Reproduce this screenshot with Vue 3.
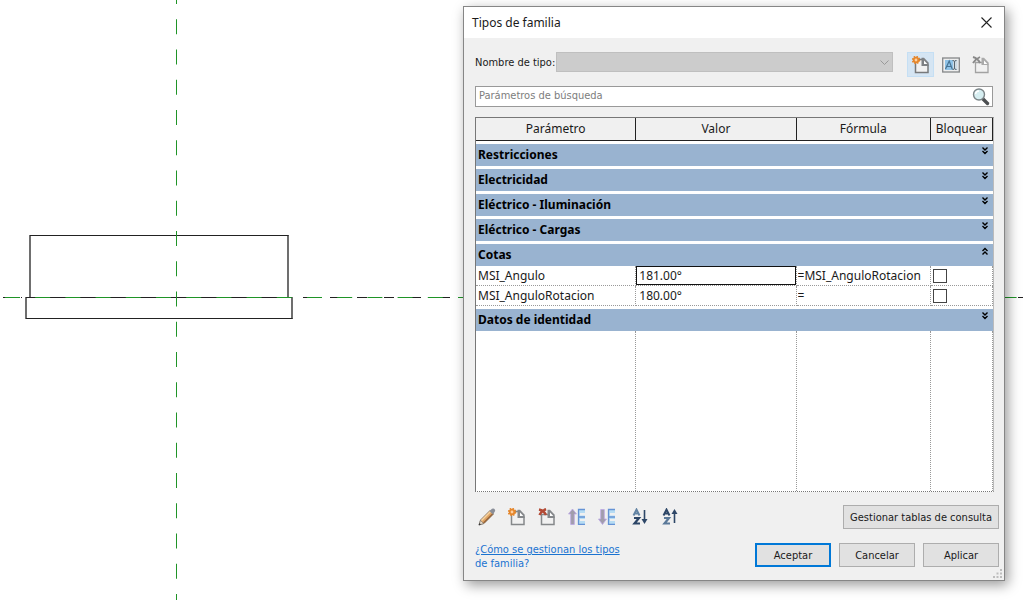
<script setup>
import { ref, reactive } from 'vue'

const search = ref('')

const groups = reactive([
  { name: 'Restricciones', open: false, rows: [] },
  { name: 'Electricidad', open: false, rows: [] },
  { name: 'Eléctrico - Iluminación', open: false, rows: [] },
  { name: 'Eléctrico - Cargas', open: false, rows: [] },
  {
    name: 'Cotas',
    open: true,
    rows: [
      { name: 'MSI_Angulo', value: '181.00°', formula: '=MSI_AnguloRotacion', locked: false, active: true },
      { name: 'MSI_AnguloRotacion', value: '180.00°', formula: '=', locked: false, active: false }
    ]
  },
  { name: 'Datos de identidad', open: false, rows: [] }
])
</script>

<template>
  <main class="workspace">
    <svg class="drawing" aria-hidden="true">
      <g fill="none" stroke="#222" stroke-width="1">
        <path d="M30 235V297M288 235V297M26 297V319M292 297V319" stroke-width="1.300" />
        <path d="M30 235.500H288.500M26 297.500H292M26 318.500H292.500" />
        <path d="M303 297.500H464" stroke-dasharray="10 17" />
        <path d="M438 297.500H450M3 297.500H5M21 297.500H22M1018 297.500H1023" />
        <path d="M5 297.500H1018" stroke="#1f9427" stroke-dasharray="15 15.200" />
        <path d="M176.500 -11V600" stroke="#1f9427" stroke-dasharray="15 15.250" />
      </g>
    </svg>

    <section class="dialog" role="dialog" aria-labelledby="dialog-title">
      <header class="titlebar">
        <h1 id="dialog-title">Tipos de familia</h1>
        <button class="close" type="button" aria-label="Cerrar">
          <svg width="11" height="11" viewBox="0 0 11 11"><path d="M.5.5l10 10M10.500.5l-10 10" stroke="#222" stroke-width="1.100" /></svg>
        </button>
      </header>

      <div class="content">
        <div class="type-row">
          <label for="type-name">Nombre de tipo:</label>
          <div class="select-wrap">
            <select id="type-name" disabled><option></option></select>
            <svg class="arrow" width="9" height="6" viewBox="0 0 9 6"><path d="M.5.5l4 4 4-4" fill="none" stroke="#999" /></svg>
          </div>
          <div class="type-tools">
            <button class="tool selected" type="button" aria-label="Nuevo tipo">
              <svg width="18" height="18" viewBox="0 0 18 18">
                <path d="M3.500 3.500H10.500L16 9V16.500H3.500Z" fill="#f1f1f1" stroke="#77797b" stroke-width="1.500" />
                <path d="M9.500 1.800h2.500l4.700 5V10H9.500Z" fill="#7e8184" /><path d="M12 4.500v3.500h3.300Z" fill="#fff" />
                <circle cx="4" cy="4" r="3.200" fill="#e5862b" /><circle cx="4" cy="4" r="3.500" fill="none" stroke="#e5862b" stroke-width="1.500" stroke-dasharray="1.500 1.250" /><circle cx="4" cy="4" r="1.400" fill="#ffd0a0" />
              </svg>
            </button>
            <button class="tool" type="button" aria-label="Cambiar nombre">
              <svg width="18" height="16" viewBox="0 0 18 16">
                <rect x=".7" y="1" width="16.600" height="14" fill="#eee" stroke="#858789" stroke-width="1.300" />
                <rect x="3" y="3" width="8" height="10" fill="#8fc3e8" /><rect x="11" y="3" width="4.500" height="10" fill="#cddbe5" />
                <path d="M3.500 12L7.200 4l3 8M5 9.500h4" fill="none" stroke="#477393" stroke-width="1.200" />
                <path d="M10.500 3.500q2 0 2 1.200v6.600q0 1.200-2 1.200M14.500 3.500q-2 0-2 1.200v6.600q0 1.200 2 1.200" fill="none" stroke="#57656f" />
              </svg>
            </button>
            <button class="tool" type="button" aria-label="Suprimir tipo">
              <svg width="18" height="18" viewBox="0 0 18 18">
                <path d="M3.500 6.500H10.500L16 9V16.500H3.500Z" fill="#f1f1f1" stroke="#a2a2a2" stroke-width="1.300" />
                <path d="M9.500 1.800h2.500l4.700 5V9H9.500Z" fill="#aaa" /><path d="M12 4.500v3.500h3.300Z" fill="#fff" />
                <path d="M1 1q5 1.500 7 6M8 1Q3.500 3 1 7" fill="none" stroke="#898989" stroke-width="1.900" />
              </svg>
            </button>
          </div>
        </div>

        <div class="search">
          <input v-model="search" type="text" placeholder="Parámetros de búsqueda" aria-label="Parámetros de búsqueda">
          <button type="button" aria-label="Buscar">
            <svg width="18" height="18" viewBox="0 0 18 18">
              <path d="M10.500 10.500l5 5" stroke="#4c4f51" stroke-width="3.400" stroke-linecap="round" />
              <circle cx="7" cy="6.500" r="5.500" fill="#d6eef1" stroke="#7c8588" stroke-width="1.400" />
              <path d="M3.500 6Q4 3 7 3" fill="none" stroke="#fff" stroke-width="1.500" />
            </svg>
          </button>
        </div>

        <table class="params">
          <colgroup><col class="c-name"><col class="c-value"><col class="c-formula"><col></colgroup>
          <thead>
            <tr><th scope="col">Parámetro</th><th scope="col">Valor</th><th scope="col">Fórmula</th><th scope="col">Bloquear</th></tr>
          </thead>
          <tbody v-for="group in groups" :key="group.name">
            <tr>
              <td class="group" colspan="4">
                <button type="button" :aria-expanded="group.open" @click="group.open = !group.open">
                  <span>{{ group.name }}</span>
                  <svg :class="{ up: group.open }" width="6" height="8" viewBox="0 0 6 8"><path d="M.5.5L3 3 5.500.5M.5 4L3 6.500 5.500 4" fill="none" stroke="#000" stroke-width="1.400" /></svg>
                </button>
              </td>
            </tr>
            <template v-if="group.open">
              <tr v-for="row in group.rows" :key="row.name" class="param">
                <td>{{ row.name }}</td>
                <td><input v-model="row.value" type="text" :class="{ active: row.active }" :aria-label="'Valor de ' + row.name"></td>
                <td><input v-model="row.formula" type="text" :aria-label="'Fórmula de ' + row.name"></td>
                <td><input v-model="row.locked" type="checkbox" :aria-label="'Bloquear ' + row.name"></td>
              </tr>
            </template>
          </tbody>
          <tbody>
            <tr class="filler"><td></td><td></td><td></td><td></td></tr>
          </tbody>
        </table>
      </div>

      <footer class="footer">
        <div class="footer-row">
          <div class="param-tools">
            <button type="button" aria-label="Editar parámetro">
              <svg width="18" height="18" viewBox="0 0 18 18">
                <path d="M1 17l1.500-5L12 2.500 15.500 6 6 15.500Z" fill="#e0a566" stroke="#75685b" stroke-width=".8" />
                <path d="M3.500 12.500L13 3" stroke="#f6d4a2" stroke-width="1.500" />
                <path d="M5.500 15L15 5.500" stroke="#95643a" stroke-width="1.200" />
                <path d="M11.500 3L14 .8q2-.8 3 1 .5 1-.3 1.900L15 6.500Z" fill="#8a8e98" />
                <path d="M1 17l1.500-4.500L5.500 15.500Z" fill="#e8dccb" stroke="#777" stroke-width=".6" /><path d="M.7 17.300l.8-2.300 1.500 1.500Z" fill="#333" />
              </svg>
            </button>
            <button type="button" aria-label="Nuevo parámetro">
              <svg width="18" height="18" viewBox="0 0 18 18">
                <path d="M3.500 3.500H10.500L16 9V16.500H3.500Z" fill="#f1f1f1" stroke="#85888a" stroke-width="1.500" />
                <path d="M9.500 1.800h2.500l4.700 5V10H9.500Z" fill="#85888b" /><path d="M12 4.500v3.500h3.300Z" fill="#fff" />
                <circle cx="4" cy="4" r="3.200" fill="#e5862b" /><circle cx="4" cy="4" r="3.500" fill="none" stroke="#e5862b" stroke-width="1.500" stroke-dasharray="1.500 1.250" /><circle cx="4" cy="4" r="1.400" fill="#ffd0a0" />
              </svg>
            </button>
            <button type="button" aria-label="Suprimir parámetro">
              <svg width="18" height="18" viewBox="0 0 18 18">
                <path d="M3.500 6.500H10.500L16 9V16.500H3.500Z" fill="#f1f1f1" stroke="#85888a" stroke-width="1.500" />
                <path d="M9.500 1.800h2.500l4.700 5V10H9.500Z" fill="#85888b" /><path d="M12 4.500v3.500h3.300Z" fill="#fff" />
                <path d="M1 1.500q5 1 7 5.500M8 1Q3.500 3 1.500 7" fill="none" stroke="#b34a35" stroke-width="2.500" />
              </svg>
            </button>
            <button type="button" aria-label="Subir parámetro">
              <svg width="18" height="18" viewBox="0 0 18 18">
                <path d="M4.500 1L8.500 6H6.300V16.500H2.700V6H.5Z" fill="#a19dab" stroke="#bba7e5" stroke-width=".8" />
                <path d="M10 1h7v4h-5v2.500h5v3.500h-5v2h5v4h-7Z" fill="#b7dcf3" /><path d="M17 1.500h-6.500v14.800H17M11 9h6" fill="none" stroke="#6593d5" stroke-width="1.300" />
              </svg>
            </button>
            <button type="button" aria-label="Bajar parámetro">
              <svg width="18" height="18" viewBox="0 0 18 18">
                <path d="M2.700 1.500H6.300V11H8.500L4.500 16.500.5 11H2.700Z" fill="#a19dab" stroke="#bba7e5" stroke-width=".8" />
                <path d="M10 1h7v4h-5v2.500h5v3.500h-5v2h5v4h-7Z" fill="#b7dcf3" /><path d="M17 1.500h-6.500v14.800H17M11 9h6" fill="none" stroke="#6593d5" stroke-width="1.300" />
              </svg>
            </button>
            <button class="sort" type="button" aria-label="Orden ascendente">
              <svg width="18" height="18" viewBox="0 0 18 18">
                <path d="M1.500 7.500L4.500 1.500l3 6M3 5.500h3" fill="none" stroke="#6283a3" stroke-width="1.900" />
                <path d="M2 10h5L2.500 15.500h5.500" fill="none" stroke="#2d4667" stroke-width="2.200" />
                <path d="M12.500 2v11" stroke="#2d4667" stroke-width="1.600" /><path d="M9.500 11h6l-3 5Z" fill="#2d4667" />
              </svg>
            </button>
            <button type="button" aria-label="Orden descendente">
              <svg width="18" height="18" viewBox="0 0 18 18">
                <path d="M1.500 7.500L4.500 1.500l3 6M3 5.500h3" fill="none" stroke="#2d4667" stroke-width="1.900" />
                <path d="M2 10h5L2.500 15.500h5.500" fill="none" stroke="#5b7999" stroke-width="2.200" />
                <path d="M12.500 5v10" stroke="#2d4667" stroke-width="1.600" /><path d="M9.500 6h6l-3-5Z" fill="#2d4667" />
              </svg>
            </button>
          </div>
          <button class="push lookup" type="button">Gestionar tablas de consulta</button>
        </div>
        <div class="footer-row actions">
          <a class="help" href="#"><span class="under">¿Cómo se gestionan los tipos</span><br>de familia?</a>
          <div class="buttons">
            <button class="push primary" type="button">Aceptar</button>
            <button class="push" type="button">Cancelar</button>
            <button class="push" type="button">Aplicar</button>
          </div>
        </div>
        <svg class="grip" width="9" height="9" viewBox="0 0 9 9" fill="#bdbdbd"><path d="M7 0h2v2H7zM3.500 3.500h2v2h-2zM7 3.500h2v2H7zM0 7h2v2H0zM3.500 7h2v2h-2zM7 7h2v2H7z" /></svg>
      </footer>
    </section>
  </main>
</template>

<style>
body { margin: 0; background: #fff; }
</style>

<style scoped>
* { box-sizing: border-box; }
.workspace { position: relative; min-height: 100vh; overflow: hidden; font-family: "DejaVu Sans Condensed", "DejaVu Sans", sans-serif; font-size: 11px; color: #1a1a1a; }
.drawing { position: absolute; inset: 0; width: 100%; height: 100%; }
.dialog { position: absolute; top: 6px; left: 463px; right: 19px; background: #f0f0f0; border: 1px solid #868686; box-shadow: 3px 4px 12px rgba(0, 0, 0, 0.4); }
button, input, select { font: inherit; color: inherit; margin: 0; padding: 0; border: 0; border-radius: 0; background: none; }
button svg { display: block; }

.titlebar { display: flex; justify-content: space-between; align-items: center; height: 31px; padding: 0 12px 0 8px; background: #fff; }
h1 { margin: 0; font: 400 12px/16px "Noto Sans", sans-serif; }

.content { padding: 14px 10px 0 11px; }
.type-row { display: flex; align-items: flex-start; }
.type-row label { line-height: 22px; margin-right: 1px; white-space: nowrap; }
.select-wrap { position: relative; flex: 1; }
select { display: block; appearance: none; width: 100%; height: 20px; background: #ccc; border: 1px solid #bfbfbf; opacity: 1; }
.arrow { position: absolute; right: 4px; top: 8px; }
.type-tools { display: flex; gap: 3px; margin-left: 14px; }
.tool { display: grid; place-items: center; width: 27px; height: 25px; }
.selected { background: #d5e5f3; border: 1px solid #c5dff4; }

.search { display: flex; align-items: center; height: 21px; margin: 9px 1px 10px 0; border: 1px solid #999; background: #fff; }
.search input { flex: 1; min-width: 0; height: 18px; padding: 0 3px 2px; outline: 0; }
.search input::placeholder { color: #7d7d7d; opacity: 1; }
.search button { margin-right: 2px; }

.params { width: 100%; table-layout: fixed; border-collapse: separate; border-spacing: 0; background: #fff; border: 1px solid #777; border-right-color: #bbb; border-bottom: 1px dotted #777; font: 12px/16px "Noto Sans", sans-serif; }
.c-name, .c-value { width: 31%; }
.c-formula { width: 26%; }
th { height: 23px; padding: 0; font-weight: 400; background: #f0f0f0; border-right: 1px solid #222; border-bottom: 1px solid #222; }
td { padding: 0; border-right: 1px dotted #999; }
.group { border-right: 0; padding-top: 3px; }
.group button { display: flex; justify-content: space-between; width: 100%; height: 22px; padding: 0 5px 0 2px; background: #99b3d0; font-weight: 700; line-height: 22px; color: #000; }
.group svg { margin-top: 3px; }
.group svg.up { transform: rotate(180deg); }
.param td { height: 20px; padding-left: 2px; border-bottom: 1px dotted #999; }
.param td:nth-child(2), .param td:nth-child(3) { padding-left: 0; }
.param input { display: block; width: 100%; height: 19px; padding: 0 2px; outline: 0; border: 1px solid transparent; }
.param td:nth-child(3) input { padding: 0; }
.param input.active { border-color: #111; }
.param input[type="checkbox"] { appearance: none; width: 14px; height: 14px; padding: 0; background: #fff; border: 1px solid #444; }
.param input[type="checkbox"]:checked { background: #345; }
.filler td { height: 160px; }

.footer { position: relative; padding: 13px 5px 9px 11px; }
.footer-row { display: flex; justify-content: space-between; align-items: center; }
.param-tools { display: flex; gap: 12px; padding-left: 3px; }
.sort { margin-left: 4px; }
.push { height: 24px; min-width: 76px; background: #e1e1e1; border: 1px solid #adadad; }
.lookup { padding: 0 6px; }
.primary { border: 2px solid #0078d7; }
.actions { margin-top: 14px; align-items: flex-start; }
.help { color: #1a73d0; line-height: 14px; text-decoration: none; }
.under { text-decoration: underline; }
.buttons { display: flex; gap: 8px; }
.grip { position: absolute; right: 2px; bottom: 2px; }
</style>
